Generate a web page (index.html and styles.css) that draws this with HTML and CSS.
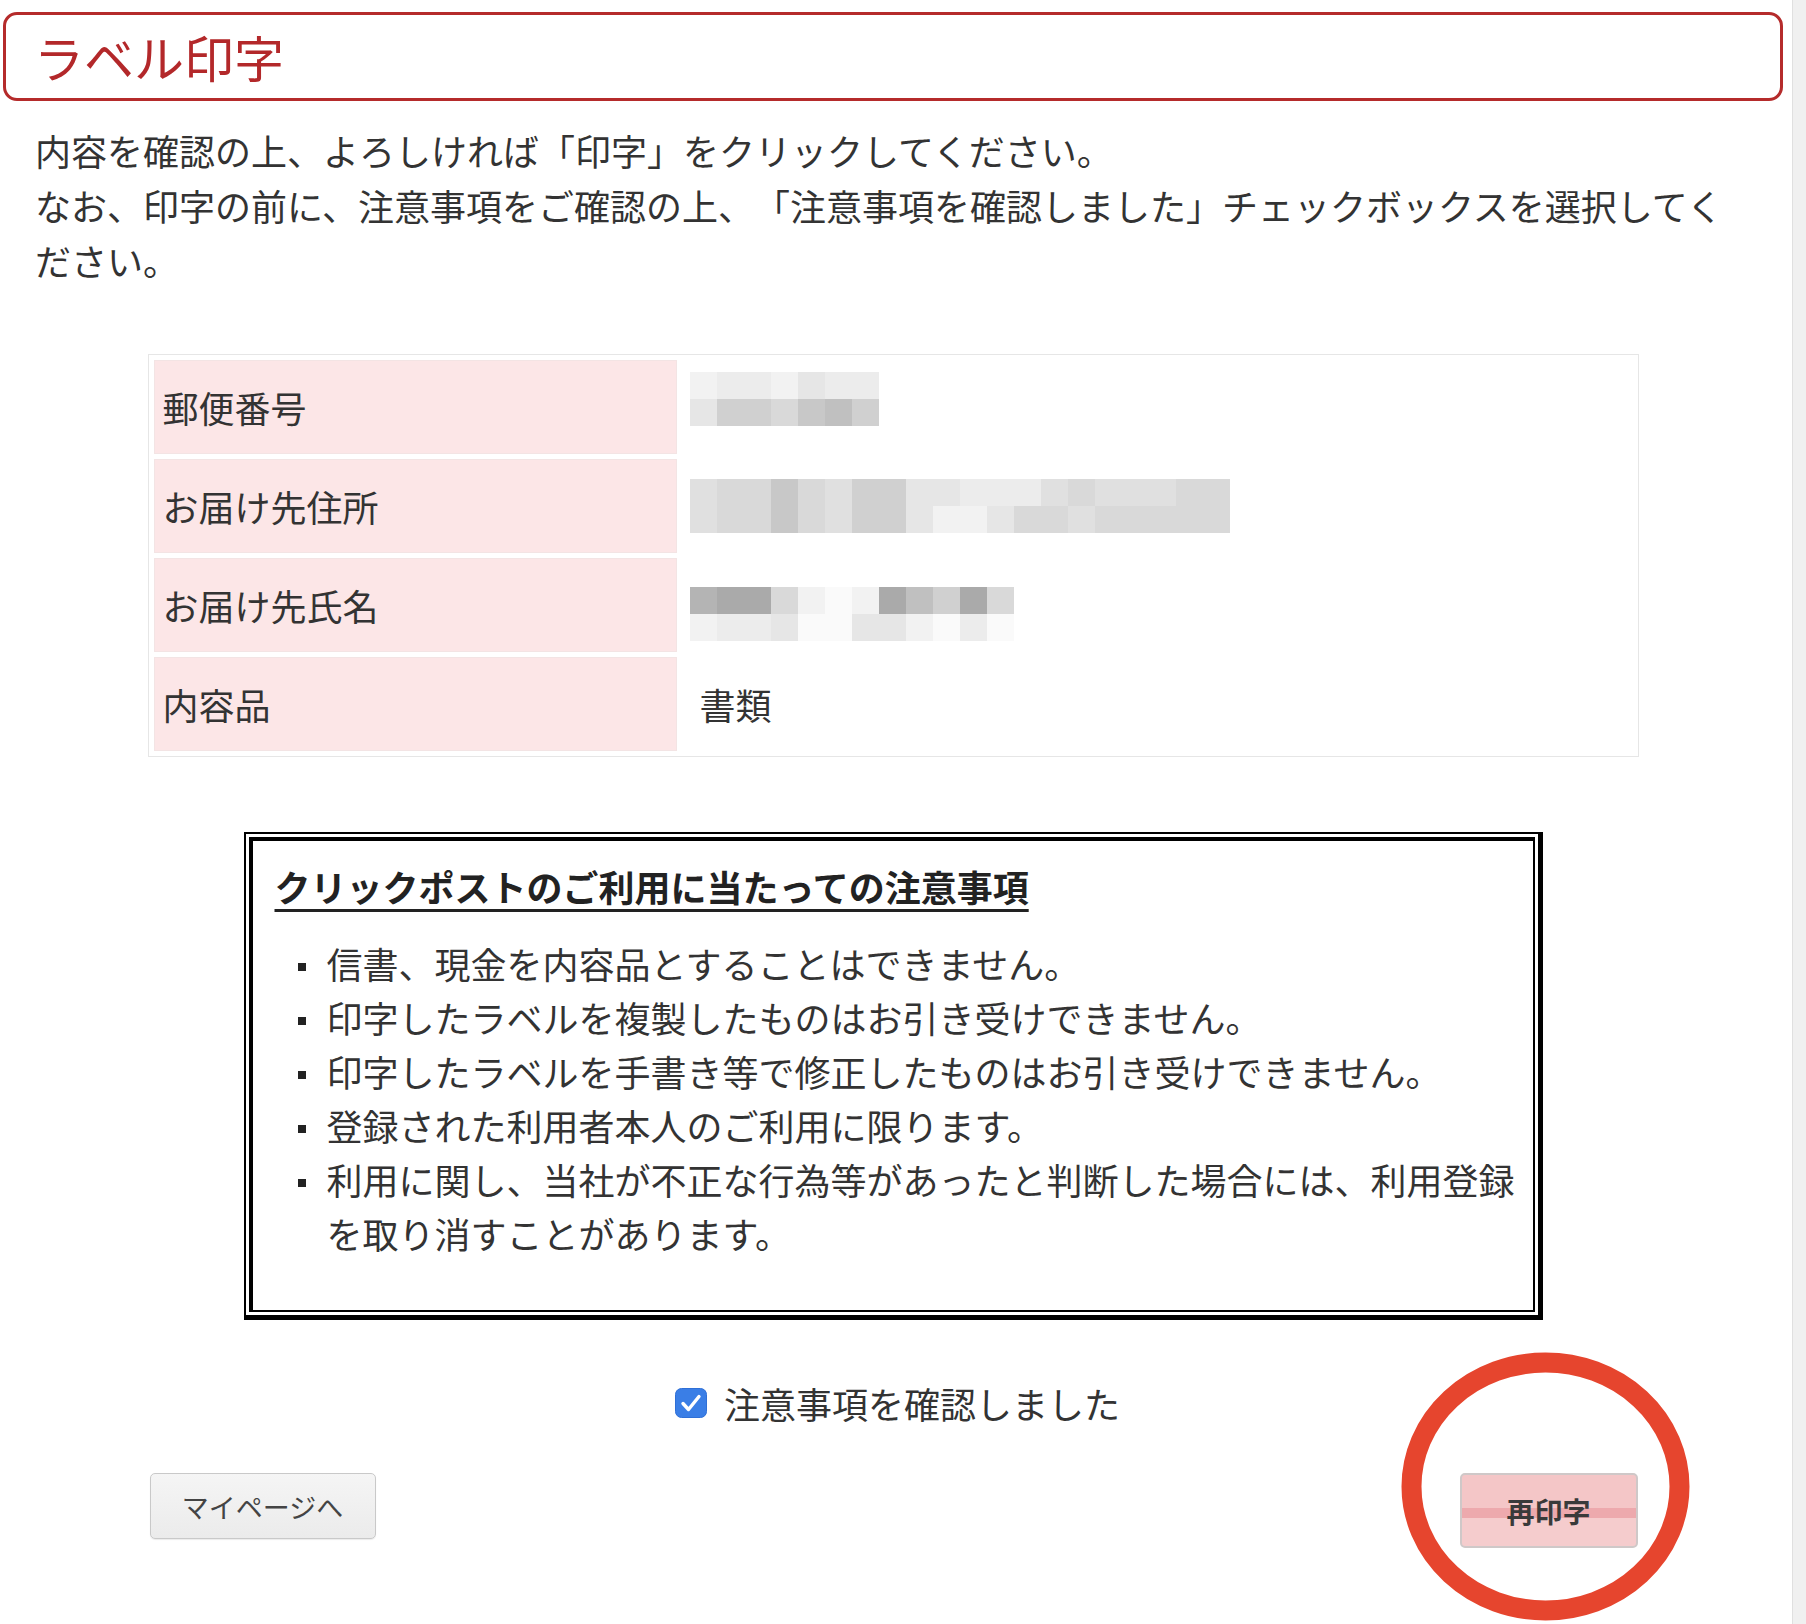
FILE: index.html
```html
<!DOCTYPE html>
<html lang="ja">
<head>
<meta charset="utf-8">
<title>ラベル印字</title>
<link rel="stylesheet" href="styles.css">
</head>
<body>
<div class="page">
  <main class="main">
    <h1 class="title">ラベル印字</h1>
    <p class="intro">内容を確認の上、よろしければ「印字」をクリックしてください。<br>なお、印字の前に、注意事項をご確認の上、「注意事項を確認しました」チェックボックスを選択してください。</p>

    <table class="info">
      <tr>
        <th>郵便番号</th>
        <td>
          <div class="mosaic mosaic-up">
            <span class="b"></span><span class="d"></span>
            <span class="c"></span><span class="g"></span>
            <span class="c"></span><span class="g"></span>
            <span class="b"></span><span class="f"></span>
            <span class="d"></span><span class="h"></span>
            <span class="c"></span><span class="i"></span>
            <span class="c"></span><span class="g"></span>
          </div>
        </td>
      </tr>
      <tr>
        <th>お届け先住所</th>
        <td>
          <div class="mosaic">
            <span class="e"></span><span class="e"></span>
            <span class="f"></span><span class="f"></span>
            <span class="f"></span><span class="f"></span>
            <span class="h"></span><span class="h"></span>
            <span class="f"></span><span class="f"></span>
            <span class="e"></span><span class="e"></span>
            <span class="g"></span><span class="g"></span>
            <span class="g"></span><span class="g"></span>
            <span class="d"></span><span class="d"></span>
            <span class="d"></span><span class="b"></span>
            <span class="c"></span><span class="b"></span>
            <span class="c"></span><span class="d"></span>
            <span class="c"></span><span class="f"></span>
            <span class="e"></span><span class="f"></span>
            <span class="f"></span><span class="e"></span>
            <span class="e"></span><span class="f"></span>
            <span class="e"></span><span class="f"></span>
            <span class="e"></span><span class="f"></span>
            <span class="f"></span><span class="f"></span>
            <span class="f"></span><span class="f"></span>
          </div>
        </td>
      </tr>
      <tr>
        <th>お届け先氏名</th>
        <td>
          <div class="mosaic mosaic-down">
            <span class="j"></span><span class="b"></span>
            <span class="k"></span><span class="c"></span>
            <span class="k"></span><span class="c"></span>
            <span class="f"></span><span class="d"></span>
            <span class="b"></span><span class="a"></span>
            <span class="a"></span><span class="a"></span>
            <span class="b"></span><span class="d"></span>
            <span class="k"></span><span class="d"></span>
            <span class="i"></span><span class="b"></span>
            <span class="g"></span><span class="a"></span>
            <span class="k"></span><span class="c"></span>
            <span class="f"></span><span class="a"></span>
          </div>
        </td>
      </tr>
      <tr>
        <th>内容品</th>
        <td>書類</td>
      </tr>
    </table>

    <div class="notice">
      <div class="notice-inner">
        <h2 class="notice-title">クリックポストのご利用に当たっての注意事項</h2>
        <ul class="notice-list">
          <li>信書、現金を内容品とすることはできません。</li>
          <li>印字したラベルを複製したものはお引き受けできません。</li>
          <li>印字したラベルを手書き等で修正したものはお引き受けできません。</li>
          <li>登録された利用者本人のご利用に限ります。</li>
          <li>利用に関し、当社が不正な行為等があったと判断した場合には、利用登録を取り消すことがあります。</li>
        </ul>
      </div>
    </div>

    <label class="confirm">
      <span class="checkbox">
        <svg width="32" height="30" viewBox="0 0 32 30">
          <rect x="0.5" y="0.5" width="31" height="29" rx="6" fill="#3a7ee6" stroke="#2f6fd6"/>
          <path d="M8 15.5 L13.5 21.5 L24 8.5" fill="none" stroke="#fff" stroke-width="3.4" stroke-linecap="round" stroke-linejoin="round"/>
        </svg>
      </span>
      <span>注意事項を確認しました</span>
    </label>

    <div class="actions">
      <button class="btn btn-mypage" type="button">マイページへ</button>
      <div class="print-wrap">
        <button class="btn btn-print" type="button">再印字</button>
        <svg class="ring" width="289" height="269" viewBox="0 0 289 269">
          <ellipse cx="144.5" cy="134.5" rx="134" ry="124" fill="none" stroke="#e6452e" stroke-width="20"/>
        </svg>
      </div>
    </div>
  </main>
  <div class="scrollbar"></div>
</div>
</body>
</html>
```

FILE: styles.css
```css
* {
  box-sizing: border-box;
}

html, body {
  margin: 0;
  padding: 0;
}

body {
  background: #fff;
  color: #333;
  font-family: "Noto Sans CJK JP", "Noto Sans", sans-serif;
  overflow: hidden;
  text-spacing-trim: space-all;
}

.page {
  display: flex;
  height: 1624px;
}

.main {
  flex: none;
  width: 1792px;
  padding: 12px 9px 0 3px;
}

.scrollbar {
  flex: 1;
  background: #f0f0f0;
  border-left: 1px solid #e0e0e0;
}

.title {
  margin: 0;
  height: 89px;
  border: 3px solid #b52b2b;
  border-radius: 14px;
  padding-left: 28px;
  font-size: 50px;
  font-weight: 400;
  line-height: 83px;
  color: #b3282a;
}

.intro {
  margin: 22px 32px 0;
  font-size: 36px;
  line-height: 55px;
}

.info {
  margin: 66px auto 0;
  width: 1491px;
  border: 1px solid #e6e6e6;
  border-collapse: separate;
  border-spacing: 5px;
  font-size: 36px;
}

.info th,
.info td {
  height: 94px;
  vertical-align: middle;
}

.info th {
  width: 523px;
  padding: 0 8px;
  border: 1px solid #f3e4e4;
  background: #fce6e7;
  text-align: left;
  font-weight: 400;
}

.info td {
  padding: 0 17px;
  border: 1px solid transparent;
  background: #fff;
}

.mosaic {
  display: grid;
  grid-auto-flow: column;
  grid-template-rows: 27px 27px;
  grid-auto-columns: 27px;
  margin-left: -10px;
  width: max-content;
}

.mosaic-up {
  margin-top: -16px;
}

.mosaic-down {
  margin-top: 18px;
}

.mosaic .a { background: #fafafa; }
.mosaic .b { background: #f2f2f2; }
.mosaic .c { background: #ececec; }
.mosaic .d { background: #e6e6e6; }
.mosaic .e { background: #e0e0e0; }
.mosaic .f { background: #d9d9d9; }
.mosaic .g { background: #d0d0d0; }
.mosaic .h { background: #c8c8c8; }
.mosaic .i { background: #c0c0c0; }
.mosaic .j { background: #b4b4b4; }
.mosaic .k { background: #aaaaaa; }

.notice {
  width: 1299px;
  margin: 75px auto 0;
  border-style: solid;
  border-color: #000;
  border-width: 2px 5px 5px 2px;
  padding: 3px;
}

.notice-inner {
  border-style: solid;
  border-color: #000;
  border-width: 4px 2px 2px 4px;
  padding: 18px 14px 50px 22px;
}

.notice-title {
  margin: 0;
  font-size: 36px;
  line-height: 54px;
  font-weight: 700;
  color: #222;
  text-decoration: underline;
  text-decoration-thickness: 3px;
  text-underline-offset: 7px;
}

.notice-list {
  margin: 23px 0 0;
  padding: 0;
  list-style: none;
  font-size: 36px;
  line-height: 54px;
}

.notice-list li {
  display: grid;
  grid-template-columns: 52px 1fr;
}

.notice-list li::before {
  content: "";
  width: 8px;
  height: 8px;
  margin: 27px 0 0 23px;
  background: #222;
}

.confirm {
  display: flex;
  justify-content: center;
  align-items: center;
  gap: 17px;
  margin-top: 56px;
  padding-left: 9px;
  font-size: 36px;
  line-height: 54px;
}

.checkbox {
  display: flex;
  width: 32px;
  height: 30px;
}

.actions {
  display: flex;
  justify-content: space-between;
  align-items: flex-start;
  width: 1491px;
  margin: 43px auto 0;
  padding: 0 1px 0 2px;
}

.btn {
  font-family: "Noto Sans CJK JP", "Noto Sans", sans-serif;
  color: #444;
  border-radius: 5px;
  cursor: pointer;
}

.btn-mypage {
  width: 226px;
  height: 66px;
  font-size: 27px;
  border: 1px solid #c9c9c9;
  background: linear-gradient(#f5f5f5, #ebebeb);
  box-shadow: 0 1px 1px rgba(0, 0, 0, 0.08);
}

.print-wrap {
  position: relative;
}

.btn-print {
  width: 178px;
  height: 75px;
  font-size: 28px;
  font-weight: 700;
  color: #3a3a3a;
  border: 2px solid #cfc8c8;
  background: linear-gradient(#f4c6c7 0%, #f4c6c7 46%, #eda9ad 46%, #eda9ad 60%, #f5cccd 60%, #f5cccd 100%);
}

.ring {
  position: absolute;
  left: -59px;
  top: -121px;
  pointer-events: none;
}
```
